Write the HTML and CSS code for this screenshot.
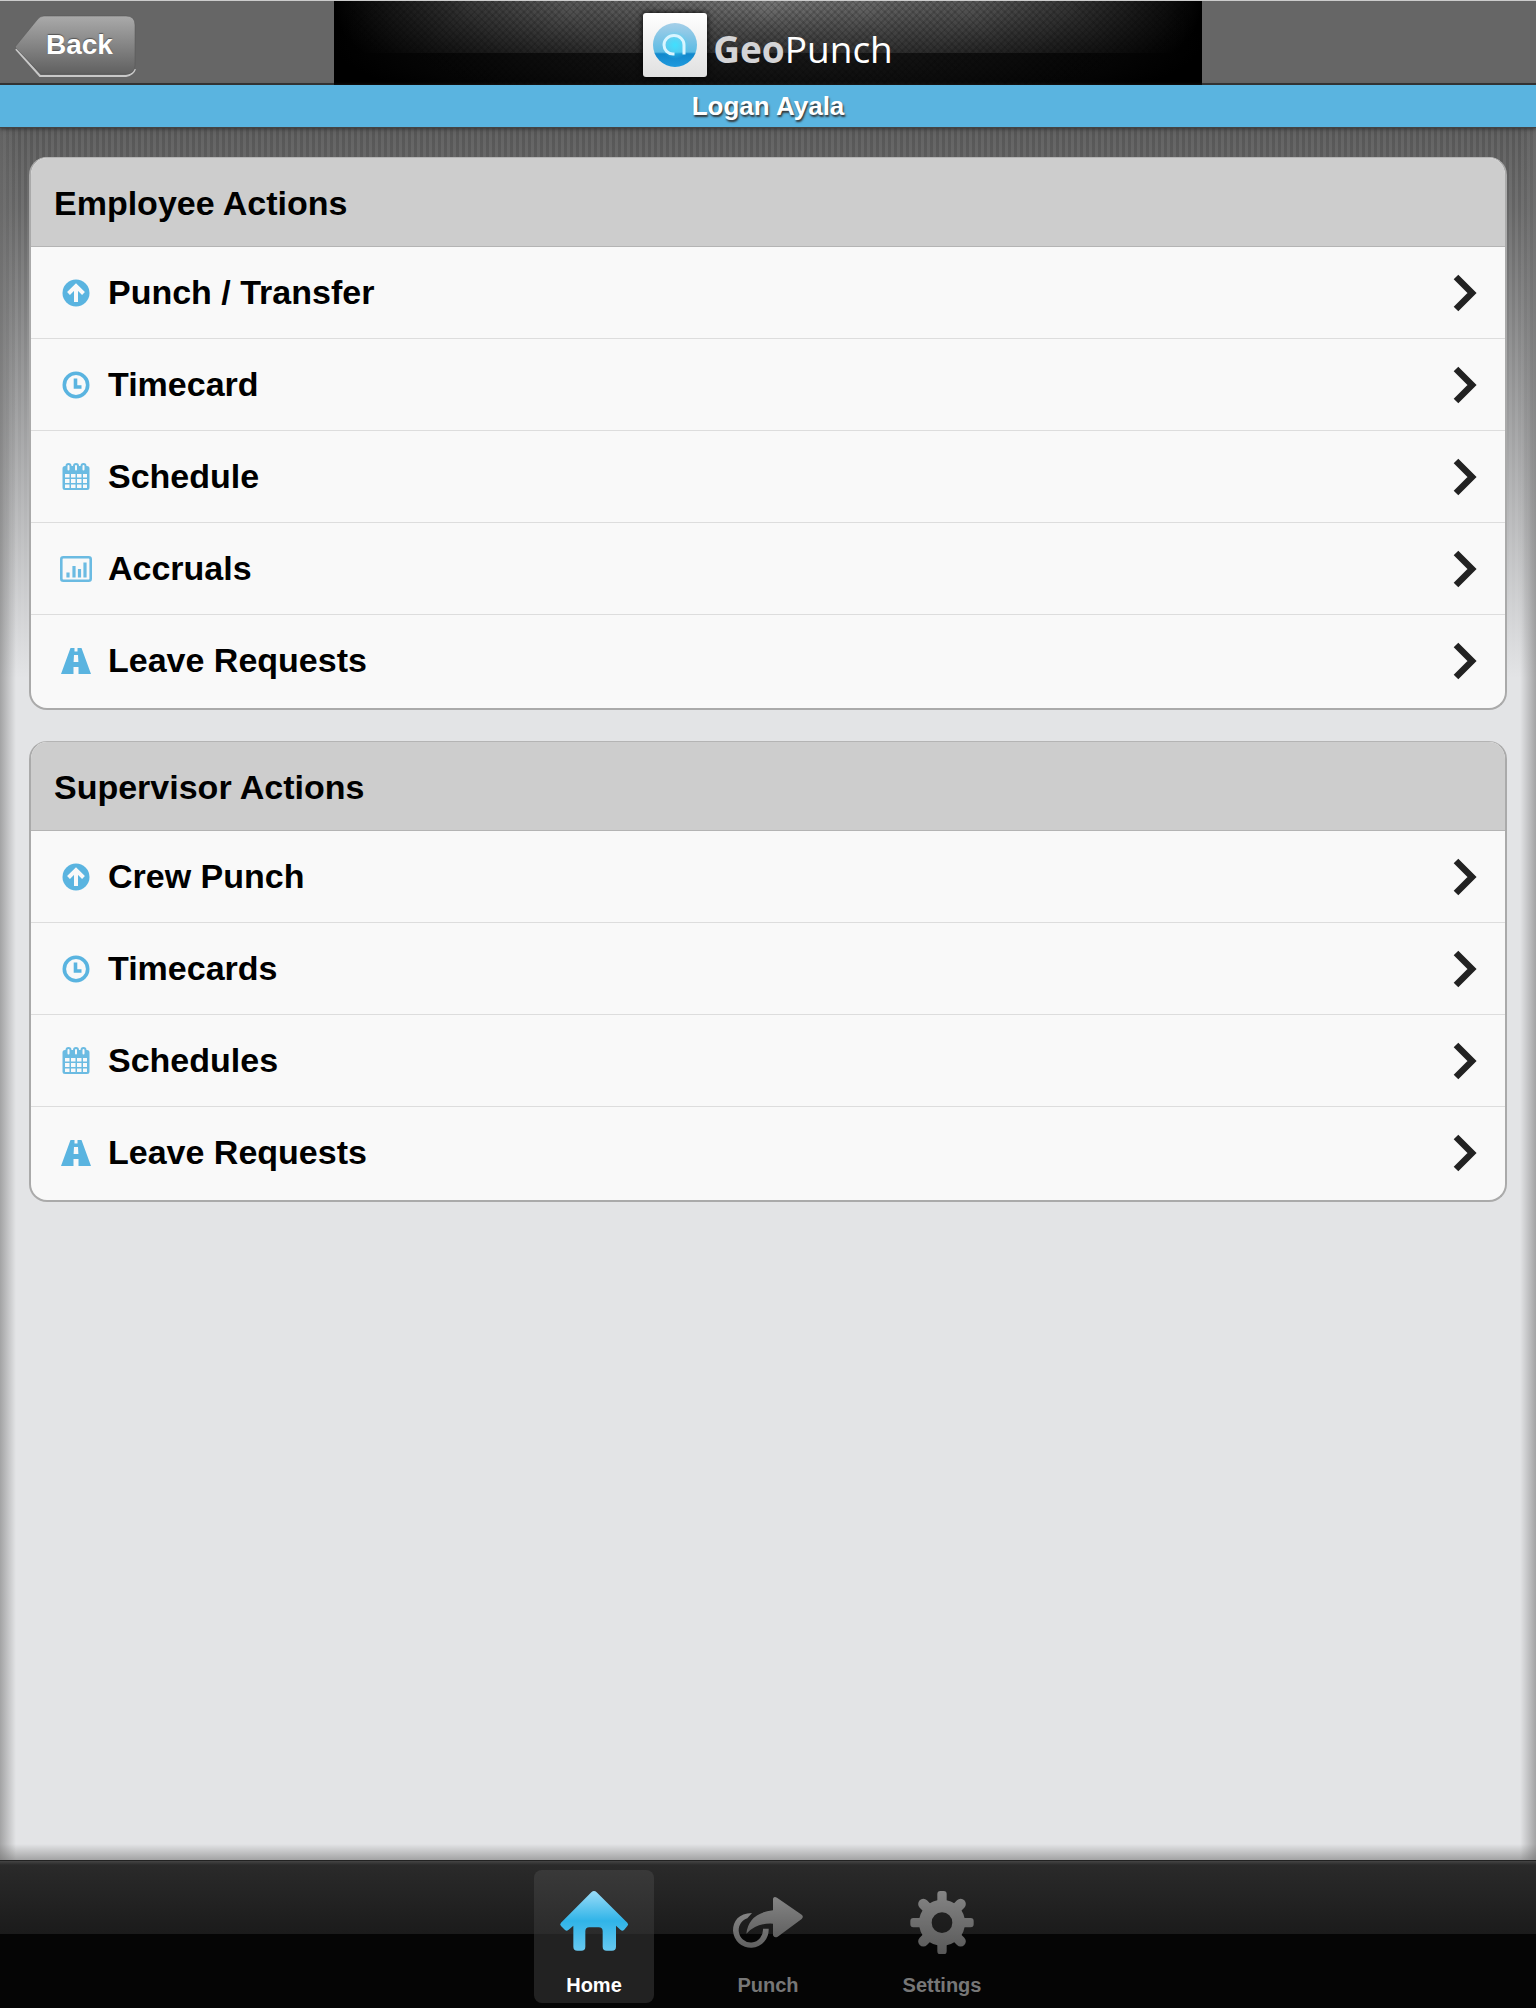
FILE: index.html
```html
<!DOCTYPE html>
<html lang="en">
<head>
  <meta charset="UTF-8">
  <meta name="viewport" content="width=device-width, initial-scale=1.0">
  <title>GeoPunch</title>
  <link rel="stylesheet" href="styles.css">
</head>
<body>
  <!-- Shared icons -->
  <svg class="sprite" width="0" height="0" aria-hidden="true">
    <symbol id="icon-punch" viewBox="0 0 32 28">
      <circle cx="16" cy="14" r="13.5" fill="#5ab4e0"/>
      <path d="M16 23V8M8.5 14.5 16 7l7.500 7.500" fill="none" stroke="#f9f9f9" stroke-width="4"/>
    </symbol>
    <symbol id="icon-clock" viewBox="0 0 32 28">
      <circle cx="16" cy="14" r="11.700" fill="none" stroke="#5ab4e0" stroke-width="3.600"/>
      <path d="M15.500 7.500v8.500h6" fill="none" stroke="#5ab4e0" stroke-width="3.600"/>
    </symbol>
    <symbol id="icon-calendar" viewBox="0 0 32 28">
      <path d="M5 3h22a2.500 2.500 0 0 1 2.500 2.500v19a2.500 2.500 0 0 1-2.500 2.500H5a2.500 2.500 0 0 1-2.500-2.500v-19A2.500 2.500 0 0 1 5 3z" fill="#6bbbe2"/>
      <path d="M5 11h4.500v3.500H5zM11 11h4.500v3.500H11zM17 11h4.500v3.500H17zM23 11h4v3.500h-4zM5 16h4.500v4H5zM11 16h4.500v4H11zM17 16h4.500v4H17zM23 16h4v4h-4zM5 21.500h4.500V25H5zM11 21.500h4.500V25H11zM17 21.500h4.500V25H17zM23 21.500h4V25h-4z" fill="#f9f9f9"/>
      <g fill="#f9f9f9" stroke="#6bbbe2" stroke-width="2">
        <rect x="6.500" y="1" width="4" height="7.500" rx="2"/>
        <rect x="14" y="1" width="4" height="7.500" rx="2"/>
        <rect x="21.500" y="1" width="4" height="7.500" rx="2"/>
      </g>
    </symbol>
    <symbol id="icon-chart" viewBox="0 0 32 28">
      <rect x="1.300" y="2.300" width="29.400" height="23.400" rx="2" fill="#f9f9f9" stroke="#6bbbe2" stroke-width="2.600"/>
      <path d="M8 22.500v-5M14 22.500V11M19.500 22.500v-8.500M25 22.500V7.500" stroke="#6bbbe2" stroke-width="3.200"/>
    </symbol>
    <symbol id="icon-road" viewBox="0 0 32 28">
      <path d="M10.500 1h4v3.500h3V1h4l9.500 26H18.500v-7h-5v7H1zM14 8l-.4 7h4.800L18 8z" fill="#5ab4e0" fill-rule="evenodd"/>
    </symbol>
    <symbol id="icon-chevron" viewBox="0 0 24 40">
      <path d="M3 4l16 16L3 36" fill="none" stroke="#222" stroke-width="6.500"/>
    </symbol>
  </svg>

  <header class="header">
    <a class="back" href="#">
      <svg class="back-shape" viewBox="0 0 124 64" aria-hidden="true">
        <defs>
          <linearGradient id="back-fill" x1="0" y1="0" x2="0" y2="1">
            <stop offset="0" stop-color="#aaa"/>
            <stop offset="0.500" stop-color="#858585"/>
            <stop offset="1" stop-color="#606060"/>
          </linearGradient>
        </defs>
        <path d="M2 34 26 61H112q7-1 9-7" fill="none" stroke="#c8c8c8" stroke-width="2"/>
        <path d="M1 32 23 5Q26 1 30 1H112q9 0 9 9V50q0 9-9 9H27Z" fill="url(#back-fill)" stroke="#555" stroke-opacity="0.500"/>
      </svg>
      <span class="back-label">Back</span>
    </a>
    <div class="banner">
      <svg class="logo" viewBox="0 0 64 64" aria-hidden="true">
        <defs>
          <linearGradient id="logo-bg" x1="0" y1="0" x2="0" y2="1">
            <stop offset="0" stop-color="#fff"/>
            <stop offset="1" stop-color="#e0e0e0"/>
          </linearGradient>
          <linearGradient id="logo-ball" x1="0" y1="0" x2="0" y2="1">
            <stop offset="0" stop-color="#a5cfe8"/>
            <stop offset="0.660" stop-color="#5cbbe4"/>
            <stop offset="0.700" stop-color="#1288cc"/>
            <stop offset="1" stop-color="#1f9ade"/>
          </linearGradient>
          <radialGradient id="logo-glow">
            <stop offset="0" stop-color="#3fe0ff"/>
            <stop offset="1" stop-color="#3fe0ff" stop-opacity="0"/>
          </radialGradient>
        </defs>
        <rect width="64" height="64" rx="3" fill="url(#logo-bg)"/>
        <circle cx="32" cy="32" r="22" fill="url(#logo-ball)"/>
        <circle cx="32" cy="32" r="14" fill="url(#logo-glow)"/>
        <path d="M31.500 41H30a9 9 0 0 1-9-9 10 9.500 0 0 1 20 0v9.500" fill="none" stroke="#d9f5ff" stroke-width="3"/>
      </svg>
      <h1 class="brand"><b>Geo</b>Punch</h1>
    </div>
  </header>
  <div class="user-bar">Logan Ayala</div>

  <main class="content">
    <section class="card">
      <h2 class="card-title">Employee Actions</h2>
      <ul class="list">
        <li><a href="#"><svg class="icon"><use href="#icon-punch"/></svg><span>Punch / Transfer</span><svg class="chevron"><use href="#icon-chevron"/></svg></a></li>
        <li><a href="#"><svg class="icon"><use href="#icon-clock"/></svg><span>Timecard</span><svg class="chevron"><use href="#icon-chevron"/></svg></a></li>
        <li><a href="#"><svg class="icon"><use href="#icon-calendar"/></svg><span>Schedule</span><svg class="chevron"><use href="#icon-chevron"/></svg></a></li>
        <li><a href="#"><svg class="icon"><use href="#icon-chart"/></svg><span>Accruals</span><svg class="chevron"><use href="#icon-chevron"/></svg></a></li>
        <li><a href="#"><svg class="icon"><use href="#icon-road"/></svg><span>Leave Requests</span><svg class="chevron"><use href="#icon-chevron"/></svg></a></li>
      </ul>
    </section>

    <section class="card">
      <h2 class="card-title">Supervisor Actions</h2>
      <ul class="list">
        <li><a href="#"><svg class="icon"><use href="#icon-punch"/></svg><span>Crew Punch</span><svg class="chevron"><use href="#icon-chevron"/></svg></a></li>
        <li><a href="#"><svg class="icon"><use href="#icon-clock"/></svg><span>Timecards</span><svg class="chevron"><use href="#icon-chevron"/></svg></a></li>
        <li><a href="#"><svg class="icon"><use href="#icon-calendar"/></svg><span>Schedules</span><svg class="chevron"><use href="#icon-chevron"/></svg></a></li>
        <li><a href="#"><svg class="icon"><use href="#icon-road"/></svg><span>Leave Requests</span><svg class="chevron"><use href="#icon-chevron"/></svg></a></li>
      </ul>
    </section>
  </main>

  <nav class="tabs">
    <a class="tab active" href="#">
      <svg class="tab-icon" viewBox="174 146 216 198" aria-hidden="true">
        <defs>
          <linearGradient id="home-fill" x1="0" y1="0" x2="0" y2="1">
            <stop offset="0" stop-color="#9adcf8"/>
            <stop offset="0.500" stop-color="#30b4e8"/>
            <stop offset="1" stop-color="#66c8f0"/>
          </linearGradient>
        </defs>
        <path d="M274 159q8-8 16 0L382 250q5 5 0 10l-10 12q-5 5-10 0l-14-13V322q0 12-12 12h-16q-12 0-12-12V276q0-12-12-12H268q-12 0-12 12v46q0 12-12 12h-12q-12 0-12-12V259l-15 13q-5 5-10 0l-12-12q-5-5 0-10Z" fill="url(#home-fill)"/>
      </svg>
      <span>Home</span>
    </a>
    <a class="tab" href="#">
      <svg class="tab-icon" viewBox="695 142 216 198" aria-hidden="true">
        <defs>
          <linearGradient id="gray-fill" x1="0" y1="0" x2="0" y2="1">
            <stop offset="0" stop-color="#858585"/>
            <stop offset="1" stop-color="#606060"/>
          </linearGradient>
        </defs>
        <path d="M818 174q2-8 12-3l74 51q7 6 0 13l-72 53q-10 5-14-4V249q-49-3-80 30 7-62 80-70Z" fill="url(#gray-fill)"/>
        <path d="M755 217C715 217 698 242 698 270a53 54 0 0 0 107-6h-17a36 38 0 0 1-73 6c0-18 11-32 26-37Z" fill="url(#gray-fill)"/>
      </svg>
      <span>Punch</span>
    </a>
    <a class="tab" href="#">
      <svg class="tab-icon" viewBox="1218 142 216 198" aria-hidden="true">
        <defs>
          <linearGradient id="gear-fill" gradientUnits="userSpaceOnUse" x1="0" y1="151" x2="0" y2="341">
            <stop offset="0" stop-color="#858585"/>
            <stop offset="1" stop-color="#585858"/>
          </linearGradient>
        </defs>
        <circle cx="1326" cy="246" r="50" fill="none" stroke="url(#gear-fill)" stroke-width="38"/>
        <path d="M1312 190V160q0-9 9-9h10q9 0 9 9V190ZM1312 302v30q0 9 9 9h10q9 0 9-9V302ZM1270 232H1240q-9 0-9 9v10q0 9 9 9H1270ZM1382 232h30q9 0 9 9v10q0 9-9 9H1382Z" fill="url(#gear-fill)"/>
        <path d="M1270 190 1290 210M1382 190 1362 210M1270 302 1290 282M1382 302 1362 282" fill="none" stroke="url(#gear-fill)" stroke-width="31" stroke-linecap="round"/>
      </svg>
      <span>Settings</span>
    </a>
  </nav>
</body>
</html>
```

FILE: styles.css
```css
* {
  box-sizing: border-box;
}
body {
  display: flex;
  flex-direction: column;
  min-height: 100vh;
  margin: 0;
  font-family: "Liberation Sans", Arial, sans-serif;
  font-weight: bold;
  color: #000;
  background: #e3e4e6;
}
a {
  color: inherit;
  text-decoration: none;
}
.sprite {
  position: absolute;
}

/* Top bar */
.header {
  display: grid;
  grid-template-columns: 1fr minmax(auto, 868px) 1fr;
  height: 85px;
  background: #666;
  border-top: 1px solid #ccc;
  border-bottom: 2px solid #333;
}
.back {
  position: relative;
  width: 124px;
  height: 64px;
  margin: 14px 0 0 14px;
}
.back-shape {
  display: block;
  width: 124px;
  height: 64px;
}
.back-label {
  position: absolute;
  top: 12px;
  left: 32px;
  font-size: 28px;
  line-height: 36px;
  color: #fff;
  text-shadow: 0 -1px 1px #555;
}
.banner {
  display: flex;
  align-items: center;
  justify-content: center;
  gap: 6px;
  height: 84px;
  padding: 4px 0 0;
  background:
    repeating-linear-gradient(45deg, rgba(0,0,0,0.12) 0 2px, transparent 2px 5px),
    repeating-linear-gradient(-45deg, rgba(0,0,0,0.12) 0 2px, transparent 2px 5px),
    linear-gradient(transparent, rgba(0,0,0,0.5) 52px) 0 0 / 100% 52px no-repeat,
    radial-gradient(ellipse 50% 300% at 50% 0, #777, #555 50%, transparent) 0 0 / 100% 52px no-repeat,
    radial-gradient(ellipse 50% 100% at 50% 50%, #1c1c1c, #000) #000;
}
.logo {
  width: 64px;
  height: 64px;
  filter: drop-shadow(0 0 3px #000);
}
.brand {
  margin: 0;
  padding-top: 8px;
  font-family: "Open Sans", "Noto Sans", sans-serif;
  font-size: 37px;
  font-weight: 400;
  line-height: 48px;
  color: #fff;
}
.brand b {
  font-weight: 700;
  color: #d4d4d6;
}
.user-bar {
  position: relative;
  height: 43px;
  font-size: 26px;
  line-height: 42px;
  text-align: center;
  color: #fff;
  text-shadow: 1px 2px 2px #333;
  background: #5ab4e0;
  border-bottom: 1px solid #444;
  box-shadow: 0 1px 4px #333;
}

/* Lists */
.content {
  flex: 1;
  display: flex;
  flex-direction: column;
  gap: 31px;
  padding: 29px 29px 40px;
  background:
    linear-gradient(to right, rgba(110,110,110,0.55), rgba(110,110,110,0) 16px),
    linear-gradient(to left, rgba(110,110,110,0.55), rgba(110,110,110,0) 16px),
    linear-gradient(to top, rgba(110,110,110,0.55), rgba(110,110,110,0) 16px),
    linear-gradient(rgba(227,228,230,0), rgba(227,228,230,0.1) 80px, #e3e4e6 550px),
    repeating-linear-gradient(to right, #565656 0 3px, #636363 3px 6px);
}
.card {
  overflow: hidden;
  background: #f9f9f9;
  border: 2px solid #aaa;
  border-top: 1px solid #b4b4b4;
  border-radius: 18px;
}
.card-title {
  margin: 0;
  padding: 3px 23px 0;
  font-size: 34px;
  line-height: 85px;
  background: #cdcdcd;
  border-bottom: 1px solid #b4b4b4;
}
.list {
  margin: 0;
  padding: 0 0 2px;
  list-style: none;
}
.list li + li {
  border-top: 1px solid #ddd;
}
.list a {
  display: flex;
  align-items: center;
  height: 91px;
  padding: 0 28px 0 29px;
  font-size: 34px;
}
.icon {
  width: 32px;
  height: 28px;
  margin-right: 16px;
}
.chevron {
  width: 24px;
  height: 40px;
  margin-left: auto;
}

/* Bottom tab bar */
.tabs {
  display: flex;
  justify-content: center;
  gap: 54px;
  padding: 9px 0 5px;
  color: #777;
  background: linear-gradient(#444 0, #2a2a2a 4px, #1b1b1b 73px, #050505 73px);
  border-top: 1px solid #222;
}
.tab {
  display: flex;
  flex-direction: column;
  align-items: center;
  gap: 19px;
  width: 120px;
  padding: 18px 0 6px;
  font-size: 20px;
  line-height: 24px;
  border-radius: 8px;
}
.tab.active {
  color: #fff;
  background: linear-gradient(#393939, #2b2b2b 64px, #222 64px);
}
.tab-icon {
  width: 72px;
  height: 66px;
}
```
